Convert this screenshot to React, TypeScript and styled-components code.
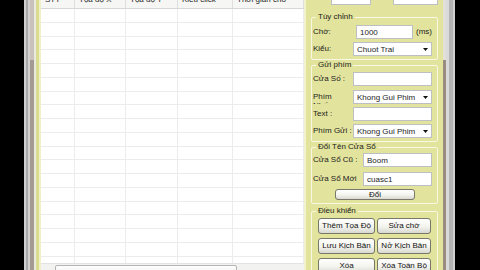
import styled, { createGlobalStyle } from "styled-components";

const GlobalStyle = createGlobalStyle`
  html, body { margin: 0; padding: 0; background: #000; }
  body { font-family: "Liberation Sans", "DejaVu Sans", sans-serif; }
`;

const COLS = "34px 51px 52px 55px 71px";
const PANEL = "#e2e39c";

const Screen = styled.div`
  width: 480px;
  height: 270px;
  overflow: hidden;
  display: flex;
  align-items: flex-start;
  background: #000;
`;

const Black = styled.div<{ $w: number }>`
  flex: none;
  width: ${p => p.$w}px;
  height: 270px;
`;

const Stripe = styled.div<{ $w: number; $c: string; $top?: string }>`
  flex: none;
  width: ${p => p.$w}px;
  height: 270px;
  background: linear-gradient(to bottom, ${p => p.$top ?? p.$c} 0 60px, ${p => p.$c} 60px);
`;

const Window = styled.div`
  flex: none;
  display: flex;
  width: 402px;
  height: 290px;
  margin-top: -10px;
`;

/* ---------- grid ---------- */

const Table = styled.div`
  flex: none;
  width: 263px;
  display: flex;
  flex-direction: column;
  background: #fff;
`;

const HeaderRow = styled.div`
  flex: none;
  display: grid;
  grid-template-columns: ${COLS};
  height: 19px;
  box-sizing: border-box;
  background: #f6f6f4;
  border-bottom: 1px solid #d6d6d6;
`;

const HeaderCell = styled.div`
  display: flex;
  align-items: flex-end;
  padding: 0 0 3px 4px;
  font-size: 8px;
  line-height: 10px;
  color: #222;
  white-space: nowrap;
  overflow: hidden;
  border-right: 1px solid #dedede;
`;

const Body = styled.div`
  flex: 1;
  overflow: hidden;
`;

const Row = styled.div`
  display: grid;
  grid-template-columns: ${COLS};
  height: 13.75px;
  box-sizing: border-box;
  border-bottom: 1px solid #ececec;
`;

const Cell = styled.div`
  border-right: 1px solid #ececec;
`;

const HScroll = styled.div`
  flex: none;
  height: 17px;
  display: flex;
  align-items: stretch;
  padding: 1px 0;
  box-sizing: border-box;
  background: #f2f2f0;
  border-top: 1px solid #e2e2e2;
`;

const ArrowBtn = styled.div`
  flex: none;
  width: 13px;
  display: flex;
  align-items: center;
  justify-content: center;
`;

const Track = styled.div`
  flex: 1;
  display: flex;
  align-items: stretch;
`;

const Thumb = styled.div`
  width: 182px;
  margin-left: 1px;
  display: flex;
  align-items: center;
  justify-content: center;
  box-sizing: border-box;
  border: 1px solid #b4b4b4;
  border-radius: 2px;
  background: linear-gradient(#fdfdfd, #ececec);
`;

const Grip = styled.div`
  display: flex;
  gap: 1px;
  & > span { width: 1px; height: 5px; background: #777; }
`;

/* ---------- right panel ---------- */

const Panel = styled.div`
  flex: none;
  width: 139px;
  box-sizing: border-box;
  padding: 0 5px;
  background: ${PANEL};
  border-left: 2px solid #f2f2cc;
  font-size: 8px;
  color: #1c1c1c;
`;

const TopRow = styled.div`
  display: grid;
  grid-template-columns: 25px 40px 10px 12px 1fr;
  align-items: center;
  height: 14px;
  margin: 1px 0 0 -5px;
`;

const Group = styled.fieldset<{ $mt?: number }>`
  margin: ${p => p.$mt ?? 0}px 0 0;
  padding: 0 5px 3px 1px;
  min-width: 0;
  border: 1px solid #f7f7e2;
  border-radius: 2px;
`;

const Legend = styled.legend`
  margin-left: 3px;
  padding: 0 2px;
  font-size: 8px;
  line-height: 10px;
  color: #1a1a1a;
`;

const FormRow = styled.div<{ $mt: number; $label?: number }>`
  display: grid;
  grid-template-columns: ${p => p.$label ?? 40}px 1fr;
  align-items: center;
  height: 14px;
  margin-top: ${p => p.$mt}px;
`;

const WaitRow = styled(FormRow)`
  grid-template-columns: 40px 57px 1fr;
  column-gap: 3px;
`;

const Label = styled.div`
  white-space: nowrap;
  line-height: 10px;
`;

const ClippedLabel = styled.div`
  align-self: stretch;
  overflow: hidden;
  padding-top: 2px;
  box-sizing: border-box;
  line-height: 9px;
  white-space: nowrap;
`;

const Input = styled.div`
  height: 14px;
  box-sizing: border-box;
  display: flex;
  align-items: center;
  padding: 0 3px;
  background: #fff;
  border: 1px solid #bcc0c4;
  white-space: nowrap;
  overflow: hidden;
`;

const Select = styled(Input)`
  justify-content: space-between;
  padding-right: 3px;
`;

const Btn = styled.button<{ $h: number }>`
  height: ${p => p.$h}px;
  padding: 0;
  margin: 0;
  box-sizing: border-box;
  font-family: "Liberation Sans", "DejaVu Sans", sans-serif;
  font-size: 8px;
  line-height: 1;
  color: #111;
  border: 1px solid #77776a;
  border-radius: 3px;
  background: linear-gradient(#ffffff, #f3f3ee 55%, #d9d9d2);
  white-space: nowrap;
`;

const WideBtn = styled(Btn)`
  display: block;
  width: 80px;
  margin: 3px 0 0 22px;
`;

const BtnGrid = styled.div`
  display: grid;
  grid-template-columns: 57px 54px;
  column-gap: 2px;
  row-gap: 4px;
  margin: 2px 0 0 5px;
`;

const Caret = () => (
  <svg width="5" height="3" viewBox="0 0 5 3">
    <path d="M0 0h5L2.5 3z" fill="#111" />
  </svg>
);

const SideArrow = ({ dir }: { dir: "l" | "r" }) => (
  <svg width="3" height="5" viewBox="0 0 3 5">
    <path d={dir === "l" ? "M3 0v5L0 2.5z" : "M0 0v5L3 2.5z"} fill="#333" />
  </svg>
);

const headers = ["STT", "Tọa độ X", "Tọa độ Y", "Kiểu click", "Thời gian chờ"];
const rows = Array.from({ length: 19 }, (_, i) => i);

export default function App() {
  return (
    <>
      <GlobalStyle />
      <Screen>
        <Black $w={24} />
        <Stripe $w={2} $c="#cfcfcf" />
        <Stripe $w={2} $c="#a9a9a9" />
        <Stripe $w={2} $c="#d2d2d2" />
        <Stripe $w={4} $c="#a59a92" $top="#c9c1bb" />
        <Stripe $w={2} $c="#e9e9de" />
        <Stripe $w={3} $c="#dadc90" />
        <Stripe $w={2} $c="#f0f0c8" />
        <Window>
          <Table>
            <HeaderRow>
              {headers.map(h => (
                <HeaderCell key={h}>{h}</HeaderCell>
              ))}
            </HeaderRow>
            <Body>
              {rows.map(r => (
                <Row key={r}>
                  {headers.map(h => (
                    <Cell key={h} />
                  ))}
                </Row>
              ))}
            </Body>
            <HScroll>
              <ArrowBtn>
                <SideArrow dir="l" />
              </ArrowBtn>
              <Track>
                <Thumb>
                  <Grip>
                    <span />
                    <span />
                    <span />
                  </Grip>
                </Thumb>
              </Track>
              <ArrowBtn>
                <SideArrow dir="r" />
              </ArrowBtn>
            </HScroll>
          </Table>

          <Panel>
            <TopRow>
              <Label>X:</Label>
              <Input />
              <span />
              <Label>Y:</Label>
              <Input />
            </TopRow>

            <Group $mt={7}>
              <Legend>Tùy chỉnh</Legend>
              <WaitRow $mt={3}>
                <Label>Chờ:</Label>
                <Input>1000</Input>
                <Label>(ms)</Label>
              </WaitRow>
              <FormRow $mt={3}>
                <Label>Kiểu:</Label>
                <Select>
                  Chuot Trai
                  <Caret />
                </Select>
              </FormRow>
            </Group>

            <Group>
              <Legend>Gửi phím</Legend>
              <FormRow $mt={2}>
                <Label>Cửa Số :</Label>
                <Input />
              </FormRow>
              <FormRow $mt={4}>
                <ClippedLabel>
                  Phím
                  <br />
                  Nhấn
                </ClippedLabel>
                <Select>
                  Khong Gui Phim
                  <Caret />
                </Select>
              </FormRow>
              <FormRow $mt={3}>
                <Label>Text :</Label>
                <Input />
              </FormRow>
              <FormRow $mt={3}>
                <Label>Phím Gửi :</Label>
                <Select>
                  Khong Gui Phim
                  <Caret />
                </Select>
              </FormRow>
            </Group>

            <Group>
              <Legend>Đổi Tên Cửa Sổ</Legend>
              <FormRow $mt={1} $label={50}>
                <Label>Cửa Sổ Cũ :</Label>
                <Input>Boom</Input>
              </FormRow>
              <FormRow $mt={5} $label={50}>
                <Label>Cửa Sổ Mới</Label>
                <Input>cuasc1</Input>
              </FormRow>
              <WideBtn $h={11}>Đổi</WideBtn>
            </Group>

            <Group $mt={2}>
              <Legend>Điều khiển</Legend>
              <BtnGrid>
                <Btn $h={16}>Thêm Tọa Độ</Btn>
                <Btn $h={16}>Sửa chờ</Btn>
                <Btn $h={16}>Lưu Kịch Bản</Btn>
                <Btn $h={16}>Nở Kịch Bản</Btn>
                <Btn $h={16}>Xóa</Btn>
                <Btn $h={16}>Xóa Toàn Bộ</Btn>
              </BtnGrid>
            </Group>
          </Panel>
        </Window>
        <Stripe $w={3} $c="#9a8c80" $top="#e2ded8" />
        <Stripe $w={3} $c="#dadada" />
        <Stripe $w={4} $c="#b4b4b4" />
        <Stripe $w={2} $c="#d0d0d0" />
        <Black $w={23} />
      </Screen>
    </>
  );
}
